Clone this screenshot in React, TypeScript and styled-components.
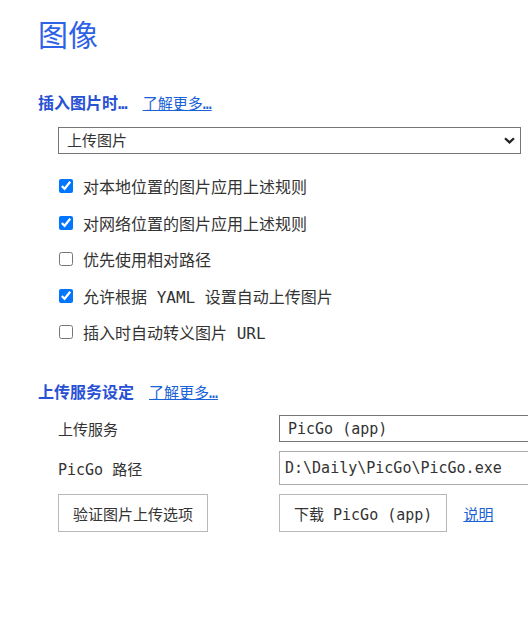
import React from "react";
import styled, { createGlobalStyle } from "styled-components";

const Global = createGlobalStyle`
  html, body {
    margin: 0;
    padding: 0;
    background: #ffffff;
    overflow: hidden;
  }
  body {
    font-family: "DejaVu Sans Mono", "Noto Sans CJK SC", monospace;
    color: #333333;
  }
`;

const Page = styled.div`
  width: 528px;
  height: 628px;
  overflow: hidden;
  box-sizing: border-box;
  padding: 18px 0 0 38px;
`;

const Title = styled.h1`
  margin: 0;
  font-size: 30px;
  line-height: 36px;
  font-weight: 400;
  color: #2f62e6;
`;

const SectionHead = styled.div<{ $top: number }>`
  display: flex;
  align-items: baseline;
  gap: 15px;
  margin-top: ${(p) => p.$top}px;
  height: 24px;
  line-height: 24px;
`;

const Heading = styled.h2`
  margin: 0;
  font-size: 16px;
  font-weight: 700;
  color: #2851d4;
`;

const Link = styled.a`
  font-size: 15px;
  color: #1a62d6;
  text-decoration: underline;
  cursor: pointer;
`;

const SelectWrap = styled.div`
  position: relative;
  margin: 11px 0 0 20px;
  width: 463px;
  height: 27px;
`;

const Select = styled.select`
  appearance: none;
  width: 100%;
  height: 100%;
  box-sizing: border-box;
  border: 1px solid #767676;
  border-radius: 0;
  background: #ffffff;
  padding: 0 8px;
  font-family: inherit;
  font-size: 15px;
  color: #333333;
  outline: none;
`;

const Chevron = styled.svg`
  position: absolute;
  right: 6px;
  top: 10px;
  pointer-events: none;
`;

const CheckList = styled.div`
  margin-top: 14px;
  padding-left: 21px;
`;

const CheckRow = styled.label`
  display: flex;
  align-items: center;
  gap: 10px;
  height: 36.5px;
  font-size: 16px;
  color: #333333;
`;

const Box = styled.input`
  margin: 0;
  width: 14px;
  height: 14px;
  accent-color: #0075ff;
`;

const Form = styled.div`
  display: grid;
  grid-template-columns: 221px auto;
  grid-template-rows: 27px 34px 38px;
  row-gap: 9px;
  margin-top: 10px;
  padding-left: 20px;
  align-items: center;
`;

const FieldLabel = styled.span`
  font-size: 15px;
  color: #333333;
`;

const TextField = styled.input<{ $muted?: boolean }>`
  width: 280px;
  height: 100%;
  box-sizing: border-box;
  border: 1px solid ${(p) => (p.$muted ? "#adadad" : "#767676")};
  padding: 0 ${(p) => (p.$muted ? 5 : 8)}px;
  font-family: inherit;
  font-size: 15px;
  color: #333333;
  background: #ffffff;
  outline: none;
`;

const Button = styled.button`
  height: 38px;
  box-sizing: border-box;
  border: 1px solid #b8b8b8;
  background: #ffffff;
  padding: 0 14px;
  font-family: inherit;
  font-size: 15px;
  color: #333333;
  cursor: pointer;
  justify-self: start;
`;

const ButtonRow = styled.div`
  display: flex;
  align-items: center;
  gap: 16px;
  height: 100%;
`;

const options = [
  { text: "对本地位置的图片应用上述规则", checked: true },
  { text: "对网络位置的图片应用上述规则", checked: true },
  { text: "优先使用相对路径", checked: false },
  { text: "允许根据 YAML 设置自动上传图片", checked: true },
  { text: "插入时自动转义图片 URL", checked: false },
];

export default function App() {
  return (
    <>
      <Global />
      <Page>
        <Title>图像</Title>

        <SectionHead $top={38}>
          <Heading>插入图片时…</Heading>
          <Link>了解更多…</Link>
        </SectionHead>

        <SelectWrap>
          <Select defaultValue="upload">
            <option value="upload">上传图片</option>
          </Select>
          <Chevron width="11" height="7" viewBox="0 0 11 7">
            <path d="M1 1.2 L5.5 5.4 L10 1.2" fill="none" stroke="#222" strokeWidth="2.2" />
          </Chevron>
        </SelectWrap>

        <CheckList>
          {options.map((o) => (
            <CheckRow key={o.text}>
              <Box type="checkbox" defaultChecked={o.checked} />
              <span>{o.text}</span>
            </CheckRow>
          ))}
        </CheckList>

        <SectionHead $top={30.5}>
          <Heading>上传服务设定</Heading>
          <Link>了解更多…</Link>
        </SectionHead>

        <Form>
          <FieldLabel>上传服务</FieldLabel>
          <TextField defaultValue="PicGo (app)" />
          <FieldLabel>PicGo 路径</FieldLabel>
          <TextField $muted defaultValue="D:\Daily\PicGo\PicGo.exe" />
          <Button>验证图片上传选项</Button>
          <ButtonRow>
            <Button>下载 PicGo (app)</Button>
            <Link>说明</Link>
          </ButtonRow>
        </Form>
      </Page>
    </>
  );
}
